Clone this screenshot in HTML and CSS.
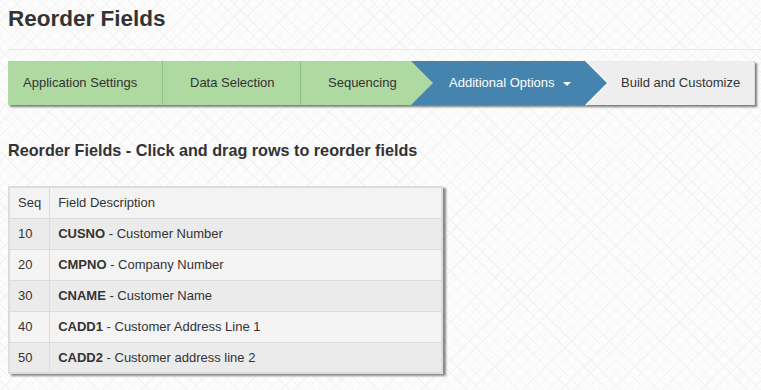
FILE: index.html
```html
<!DOCTYPE html>
<html lang="en">
<head>
    <meta charset="UTF-8">
    <meta name="viewport" content="width=device-width, initial-scale=1.0">
    <title>Reorder Fields</title>
    <link rel="stylesheet" href="styles.css">
</head>
<body>
    <div class="page">
        <h1>Reorder Fields</h1>
        <hr class="divider">

        <div class="wizard">
            <div class="step done step-app">Application Settings</div>
            <div class="step done step-data">Data Selection</div>
            <div class="step done step-seq arrow">Sequencing</div>
            <div class="step active step-opts arrow">Additional Options <span class="caret"></span></div>
            <div class="step todo step-build">Build and Customize</div>
        </div>

        <h2>Reorder Fields - Click and drag rows to reorder fields</h2>

        <table class="fields">
            <thead>
                <tr><th class="seq">Seq</th><th>Field Description</th></tr>
            </thead>
            <tbody>
                <tr><td>10</td><td><b>CUSNO</b> - Customer Number</td></tr>
                <tr><td>20</td><td><b>CMPNO</b> - Company Number</td></tr>
                <tr><td>30</td><td><b>CNAME</b> - Customer Name</td></tr>
                <tr><td>40</td><td><b>CADD1</b> - Customer Address Line 1</td></tr>
                <tr><td>50</td><td><b>CADD2</b> - Customer address line 2</td></tr>
            </tbody>
        </table>
    </div>
</body>
</html>
```

FILE: styles.css
```css
:root {
    --green: #aedaa1;
    --green-line: #8fbf82;
    --blue: #4584ae;
    --grey: #eeeeee;
    --text: #333;
    --line: #dcdcdc;
}
* {
    box-sizing: border-box;
}
body {
    margin: 0;
    font-family: "Liberation Sans", Arial, sans-serif;
    color: var(--text);
    background-color: #fcfcfc;
    background-image:
        repeating-linear-gradient(45deg, #f4f4f4 0 1px, transparent 1px 9px),
        repeating-linear-gradient(-45deg, #f4f4f4 0 1px, transparent 1px 9px);
}
.page {
    padding: 6px 0 20px 8px;
}
h1 {
    margin: 0;
    font-size: 22.5px;
    line-height: 25px;
    font-weight: bold;
}
.divider {
    margin: 18px 0 0;
    border: 0;
    border-top: 1px solid #e8e8e8;
}

/* wizard steps */
.wizard {
    display: flex;
    width: 747px;
    height: 44px;
    margin-top: 11px;
    box-shadow: 2px 2px 2px rgba(0, 0, 0, 0.5);
}
.step {
    position: relative;
    height: 44px;
    line-height: 44px;
    font-size: 13px;
    white-space: nowrap;
}
.done {
    background: var(--green);
}
.active {
    background: var(--blue);
    color: #fff;
}
.todo {
    background: var(--grey);
    border-right: 1px solid #ddd;
}
.step-app {
    width: 155px;
    padding-left: 15px;
    border-right: 1px solid var(--green-line);
}
.step-data {
    width: 138px;
    padding-left: 27px;
    border-right: 1px solid var(--green-line);
}
.step-seq {
    width: 110px;
    padding-left: 27px;
}
.step-opts {
    width: 174px;
    padding-left: 38px;
}
.step-build {
    flex: 1;
    padding-left: 36px;
}
.arrow::after {
    content: "";
    position: absolute;
    top: 0;
    right: -22px;
    z-index: 2;
    border-top: 22px solid transparent;
    border-bottom: 22px solid transparent;
    border-left: 22px solid var(--green);
}
.active.arrow::before {
    content: "";
    position: absolute;
    top: -1px;
    right: -24px;
    z-index: 1;
    border-top: 23px solid transparent;
    border-bottom: 23px solid transparent;
    border-left: 23px solid #fafafa;
}
.active.arrow::after {
    border-left-color: var(--blue);
}
.caret {
    display: inline-block;
    margin-left: 5px;
    vertical-align: middle;
    border-top: 4px solid #fff;
    border-left: 4px solid transparent;
    border-right: 4px solid transparent;
}

h2 {
    margin: 35px 0 0;
    font-size: 16.2px;
    line-height: 20px;
    font-weight: bold;
}

/* fields table */
.fields {
    width: 435px;
    margin-top: 26px;
    border-collapse: collapse;
    border: 2px solid var(--line);
    font-size: 13px;
    box-shadow: 3px 2px 2px rgba(0, 0, 0, 0.45);
}
.fields th,
.fields td {
    height: 31px;
    padding: 0 8px;
    border: 1px solid var(--line);
    text-align: left;
    font-weight: normal;
}
.fields td b {
    font-weight: bold;
}
.fields .seq {
    width: 40px;
}
.fields thead tr {
    background: #f3f3f3;
}
.fields tbody tr:nth-child(odd) {
    background: #ebebeb;
}
.fields tbody tr:nth-child(even) {
    background: #f4f4f4;
}
```
